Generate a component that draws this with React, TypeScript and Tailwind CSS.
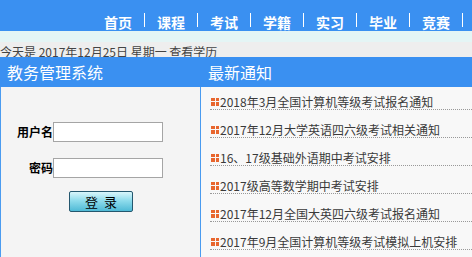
import React from "react";

const navItems = ["首页", "课程", "考试", "学籍", "实习", "毕业", "竞赛"];

const notices = [
  "2018年3月全国计算机等级考试报名通知",
  "2017年12月大学英语四六级考试相关通知",
  "16、17级基础外语期中考试安排",
  "2017级高等数学期中考试安排",
  "2017年12月全国大英四六级考试报名通知",
  "2017年9月全国计算机等级考试模拟上机安排",
];

function Dots() {
  return (
    <span className="grid h-[8px] w-[8px] shrink-0 grid-cols-2 gap-[1px]">
      <span className="bg-[#e8662e]" />
      <span className="bg-[#e8662e]" />
      <span className="bg-[#e8662e]" />
      <span className="bg-[#e8662e]" />
    </span>
  );
}

export default function App() {
  return (
    <div className="h-[257px] w-[472px] overflow-hidden bg-[#eeeeee] font-['Noto_Sans_CJK_SC',sans-serif]">
      {/* top nav */}
      <nav className="flex h-[31px] justify-end bg-[#3a90f1] pr-[9px] pt-[13px]">
        {navItems.map((n) => (
          <div key={n} className="flex items-center">
            <span className="px-[12px] text-[14px] font-bold leading-[16px] text-white">{n}</span>
            <span className="h-[14px] w-px self-start bg-white" />
          </div>
        ))}
      </nav>
      <div className="h-[11px] bg-[#e4f5f5]" />
      <div className="h-[15px] overflow-hidden pt-[1px] text-[12px] leading-[18px] text-[#444]">
        今天是 2017年12月25日 星期一 查看学历
      </div>

      <div className="flex">
        {/* login panel */}
        <section className="w-[201px] shrink-0 border-x border-[#4a9bf0] bg-[#f4f4f4]">
          <h2 className="-mx-px flex h-[30px] items-center bg-[#3a90f1] pl-[7px] text-[16px] text-white">
            教务管理系统
          </h2>
          <div className="h-[175px] pt-[35px]">
            <div className="flex items-center">
              <label className="w-[52px] text-right text-[12px] font-bold text-black">用户名</label>
              <input className="h-[20px] w-[110px] border border-[#a5a5a5] bg-white" />
            </div>
            <div className="mt-[16px] flex items-center">
              <label className="w-[52px] text-right text-[12px] font-bold text-black">密码</label>
              <input type="password" className="h-[20px] w-[110px] border border-[#a5a5a5] bg-white" />
            </div>
            <button className="ml-[68px] mt-[13px] flex h-[21px] w-[64px] items-center justify-center rounded-[2px] border border-[#24576e] bg-[linear-gradient(#d9f6fb,#8fdcec_45%,#4fbad6)] text-[13px] leading-none text-black">
              登&nbsp;&nbsp;录
            </button>
          </div>
        </section>

        {/* notices */}
        <section className="min-w-0 flex-1 bg-[#f8f8f8]">
          <h2 className="flex h-[30px] items-center bg-[#3a90f1] pl-[7px] text-[16px] text-white">最新通知</h2>
          <ul className="ml-[9px]">
            {notices.map((t) => (
              <li
                key={t}
                className="flex h-[28px] items-center gap-[1px] border-b border-dotted border-[#999] pl-[1px] pt-[12px] text-[12px] leading-[15px] text-[#3a3a3a] first:h-[23px] first:pt-[7px]"
              >
                <Dots />
                <span className="whitespace-nowrap">{t}</span>
              </li>
            ))}
          </ul>
        </section>
      </div>
    </div>
  );
}
